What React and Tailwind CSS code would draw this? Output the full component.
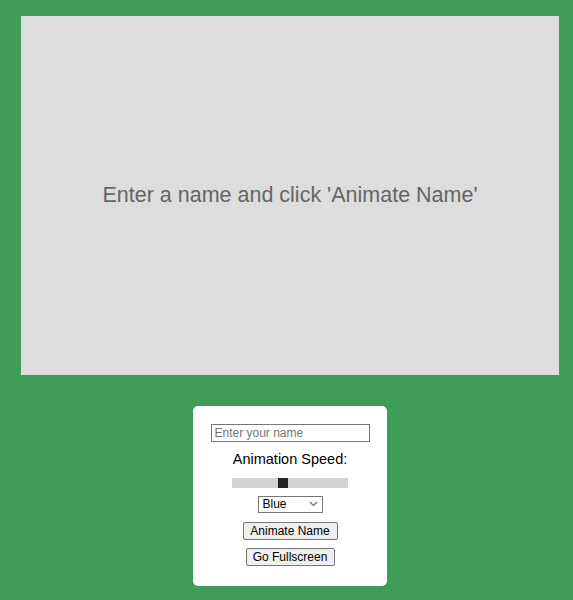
import React from "react";

export default function App() {
  return (
    <div className="min-h-[600px] w-full bg-[#409d57] pt-4 pl-[21px] font-['Liberation_Sans',Arial,sans-serif]">
      <div className="w-[538px]">
        {/* Stage */}
        <div className="flex h-[359px] items-center justify-center bg-[#dddddd]">
          <p className="text-[21.5px] text-[#666666]">Enter a name and click 'Animate Name'</p>
        </div>

        {/* Controls */}
        <div className="mt-[31px] flex justify-center">
          <div className="flex h-[180px] w-[194px] flex-col items-center rounded-[5px] bg-white pt-[18px]">
            <input
              type="text"
              placeholder="Enter your name"
              className="h-[18px] w-[159px] border border-[#767676] px-[3px] text-[12px] leading-none text-black placeholder:text-[#757575] outline-none"
            />
            <div className="mt-[10px] text-[14.5px] leading-none text-black">Animation Speed:</div>
            <div className="relative mt-[11px] h-[10px] w-[116px] bg-[#d3d3d3]">
              <div className="absolute left-[46px] top-0 h-[10px] w-[10px] bg-[#222222]" />
            </div>
            <div className="mt-[8px] flex h-[17px] w-[65px] items-center justify-between border border-[#767676] pl-[4px] pr-[4px] text-[12px] text-black">
              <span>Blue</span>
              <svg width="9" height="6" viewBox="0 0 9 6" fill="none">
                <path d="M1 1l3.5 3.5L8 1" stroke="#6b6b6b" strokeWidth="1.2" />
              </svg>
            </div>
            <button className="mt-[9px] h-[18px] w-[95px] rounded-[2px] border border-[#767676] bg-[#efefef] text-[12px] leading-none text-black">
              Animate Name
            </button>
            <button className="mt-[8px] h-[18px] w-[89px] rounded-[2px] border border-[#767676] bg-[#efefef] text-[12px] leading-none text-black">
              Go Fullscreen
            </button>
          </div>
        </div>
      </div>
    </div>
  );
}
